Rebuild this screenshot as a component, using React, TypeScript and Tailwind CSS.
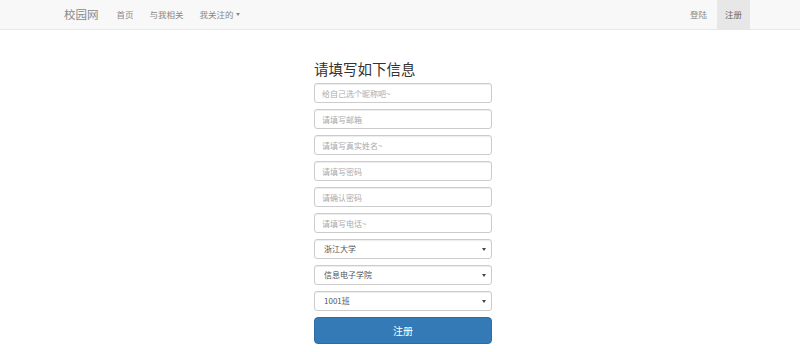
import React from 'react'

const font = { fontFamily: '"Noto Sans CJK SC", "Noto Sans", sans-serif' }

const inputs = [
  '给自己选个昵称吧~',
  '请填写邮箱',
  '请填写真实姓名~',
  '请填写密码',
  '请确认密码',
  '请填写电话~',
]

const selects = ['浙江大学', '信息电子学院', '1001班']

function Caret() {
  return (
    <svg width="4" height="3" viewBox="0 0 4 3" className="shrink-0">
      <path d="M0 0h4L2 3z" fill="#444" />
    </svg>
  )
}

export default function App() {
  return (
    <div className="min-h-[352px] w-full bg-white text-[#333]" style={font}>
      <nav className="flex h-[30px] items-stretch justify-between border-b border-[#e7e7e7] bg-[#f8f8f8]">
        <div className="ml-[64px] flex items-center gap-[16px]">
          <a className="mr-[2px] text-[11.5px] text-[#888]">校园网</a>
          <a className="text-[8.5px] text-[#888]">首页</a>
          <a className="text-[8.5px] text-[#888]">与我相关</a>
          <a className="flex items-center gap-[2px] text-[8.5px] text-[#888]">
            我关注的
            <svg width="4" height="3" viewBox="0 0 4 3">
              <path d="M0 0h4L2 3z" fill="#888" />
            </svg>
          </a>
        </div>
        <div className="mr-[50px] flex items-stretch gap-[2px]">
          <a className="flex items-center px-[8px] text-[8.5px] text-[#888]">登陆</a>
          <a className="flex items-center bg-[#e7e7e7] px-[8px] text-[8.5px] text-[#666]">注册</a>
        </div>
      </nav>

      <div className="flex justify-center pl-[6px]">
        <form className="flex w-[178px] flex-col">
          <h3 className="mt-[29px] mb-[4px] text-[14.5px] leading-[20px] text-[#333]">请填写如下信息</h3>
          <div className="flex flex-col gap-[6px]">
            {inputs.map((p) => (
              <input
                key={p}
                placeholder={p}
                className="h-[20px] w-full rounded-[3px] border border-[#ccc] px-[7px] text-[8px] text-[#555] shadow-[inset_0_1px_1px_rgba(0,0,0,0.075)] outline-none placeholder:text-[#aaa]"
                style={font}
              />
            ))}
            {selects.map((s) => (
              <div
                key={s}
                className="flex h-[20px] w-full items-center justify-between rounded-[3px] border border-[#ccc] pl-[9px] pr-[5px] text-[8px] text-[#555] shadow-[inset_0_1px_1px_rgba(0,0,0,0.075)]"
              >
                <span>{s}</span>
                <Caret />
              </div>
            ))}
            <button
              type="button"
              className="h-[27px] w-full rounded-[4px] border border-[#2e6da4] bg-[#337ab7] text-[10px] text-white"
              style={font}
            >
              注册
            </button>
          </div>
        </form>
      </div>
    </div>
  )
}
